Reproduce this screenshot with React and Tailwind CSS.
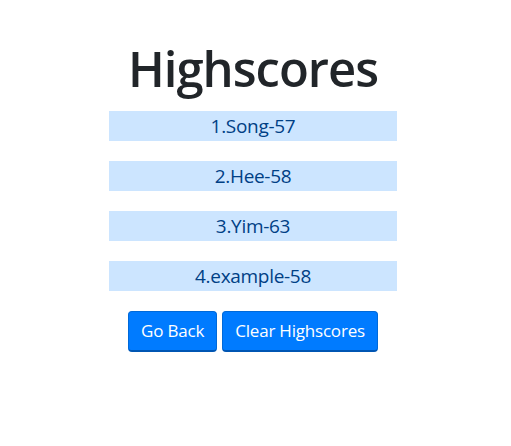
import React from "react";

const scores = ["1.Song-57", "2.Hee-58", "3.Yim-63", "4.example-58"];

export default function App() {
  return (
    <div
      className="w-[506px] min-h-[446px] bg-white flex flex-col items-center pt-[36px]"
      style={{ fontFamily: '"Open Sans", "Noto Sans", sans-serif' }}
    >
      <h1 className="text-[49px] leading-[64px] font-semibold text-[#212529] tracking-[-1px] m-0">
        Highscores
      </h1>
      <ul className="flex flex-col gap-[20px] mt-[11px] w-[288px]">
        {scores.map((s) => (
          <li
            key={s}
            className="h-[30px] bg-[#cce5ff] text-[#004085] text-[19px] flex items-center justify-center tracking-[-0.3px]"
          >
            {s}
          </li>
        ))}
      </ul>
      <div className="flex gap-[5px] mt-[20px]">
        <button className="h-[41px] px-[12px] bg-[#007bff] text-white text-[17px] rounded-[4px] border border-[#0069d9] border-b-2 border-b-[#0056b3] tracking-[-0.2px]">
          Go Back
        </button>
        <button className="h-[41px] px-[12px] bg-[#007bff] text-white text-[17px] rounded-[4px] border border-[#0069d9] border-b-2 border-b-[#0056b3] tracking-[-0.2px]">
          Clear Highscores
        </button>
      </div>
    </div>
  );
}
